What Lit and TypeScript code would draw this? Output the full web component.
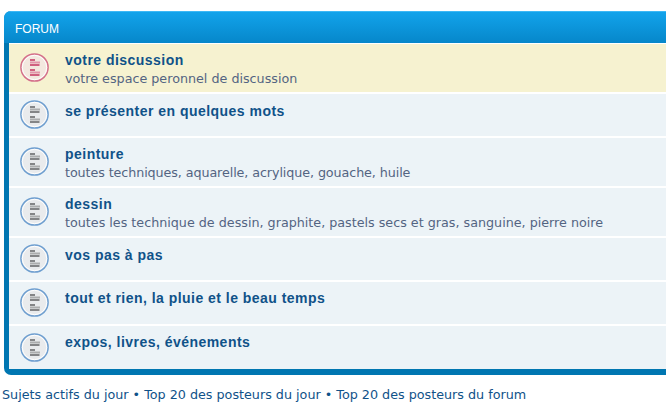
import { LitElement, html, css, svg } from "lit";
import { customElement } from "lit/decorators.js";

const rows = [
  { t: "votre discussion", s: "votre espace peronnel de discussion", hot: true },
  { t: "se présenter en quelques mots", low: true },
  { t: "peinture", s: "toutes techniques, aquarelle, acrylique, gouache, huile", tight: true },
  { t: "dessin", s: "toutes les technique de dessin, graphite, pastels secs et gras, sanguine, pierre noire" },
  { t: "vos pas à pas", low: true },
  { t: "tout et rien, la pluie et le beau temps" },
  { t: "expos, livres, événements" },
];

function icon(hot: boolean) {
  const ring = hot ? "#d4708b" : "#6f9fd0";
  const bar = hot ? "#d0607f" : "#848587";
  const bar2 = hot ? "#e295aa" : "#acadae";
  const fill = hot ? "#f3e8df" : "#e9ebed";
  return html`<svg class="ic" width="30" height="30" viewBox="0 0 30 30">
    <circle cx="14.5" cy="14.5" r="13.6" fill="${fill}" stroke="${ring}" stroke-width="1.5"></circle>
    <circle cx="14.5" cy="14.5" r="12.2" fill="none" stroke="#fff" stroke-width="1"></circle>
    ${[6, 16].map(
      (y) => svg`
        <rect x="10" y="${y}" width="5" height="2" fill="${bar}"></rect>
        <rect x="10" y="${y + 2.5}" width="10" height="2" fill="${bar2}"></rect>
        <rect x="10" y="${y + 5}" width="9.5" height="2" fill="${bar}"></rect>
      `
    )}
  </svg>`;
}

@customElement("app-root")
export class AppRoot extends LitElement {
  static styles = css`
    :host {
      display: block;
      width: 666px;
      height: 408px;
      overflow: hidden;
      background: #fff;
      font-family: "DejaVu Sans", Verdana, sans-serif;
    }
    .clip {
      display: flex;
      height: 3px;
      overflow: hidden;
      font-size: 13px;
      line-height: 3px;
      color: #105289;
    }
    .clip span {
      display: block;
      transform: translateY(-9px);
    }
    .clip .a { margin-left: 126px; }
    .clip .b { margin-left: 22px; }
    .clip .c { margin-left: 203px; }
    .clip .d { margin-left: 96px; }
    .panel {
      margin: 8px -40px 0 4px;
      background: #0076b1;
      border-radius: 7px 0 0 7px;
      padding: 0 0 6px 5px;
      overflow: hidden;
    }
    .head {
      height: 31px;
      margin-left: -5px;
      padding-left: 11px;
      border-top: 1px solid #3db8f5;
      background: linear-gradient(#12a3eb, #0687ca);
      color: #fff;
      font: 12px/34px "Liberation Sans", Arial, sans-serif;
    }
    .rows {
      display: flex;
      flex-direction: column;
      gap: 2px;
      padding-top: 1px;
      background: #fff;
    }
    .row {
      display: flex;
      gap: 15px;
      align-items: center;
      height: 42px;
      padding-left: 11px;
      background: #ecf3f7;
    }
    .row:last-child {
      height: 43px;
    }
    .row.sub {
      height: 48px;
    }
    .row.hot {
      background: #f6f2d0;
    }
    .ic {
      flex: none;
    }
    .txt {
      align-self: flex-start;
      padding-top: 8px;
    }
    .row.low .txt {
      padding-top: 9px;
    }
    .t {
      color: #105289;
      font: bold 14px/16px "Liberation Sans", Arial, sans-serif;
      letter-spacing: 0.47px;
    }
    .s {
      color: #536482;
      font-size: 12.72px;
      line-height: 22px;
    }
    .s.tight {
      letter-spacing: -0.09px;
    }
    .foot {
      margin: 12px 0 0 2px;
      font-size: 12.74px;
      line-height: 16px;
      color: #105289;
      white-space: nowrap;
    }
  `;

  render() {
    return html`
      <div class="clip"><span class="a">g</span><span class="b">p</span><span class="c">g</span><span class="d">g</span></div>
      <div class="panel">
        <div class="head">FORUM</div>
        <div class="rows">
          ${rows.map(
            (r) => html`<div class="row ${r.s ? "sub" : ""} ${r.hot ? "hot" : ""} ${r.low ? "low" : ""}">
              ${icon(!!r.hot)}
              <div class="txt">
                <div class="t">${r.t}</div>
                ${r.s ? html`<div class="s ${r.tight ? "tight" : ""}">${r.s}</div>` : ""}
              </div>
            </div>`
          )}
        </div>
      </div>
      <div class="foot">Sujets actifs du jour • Top 20 des posteurs du jour • Top 20 des posteurs du forum</div>
    `;
  }
}
